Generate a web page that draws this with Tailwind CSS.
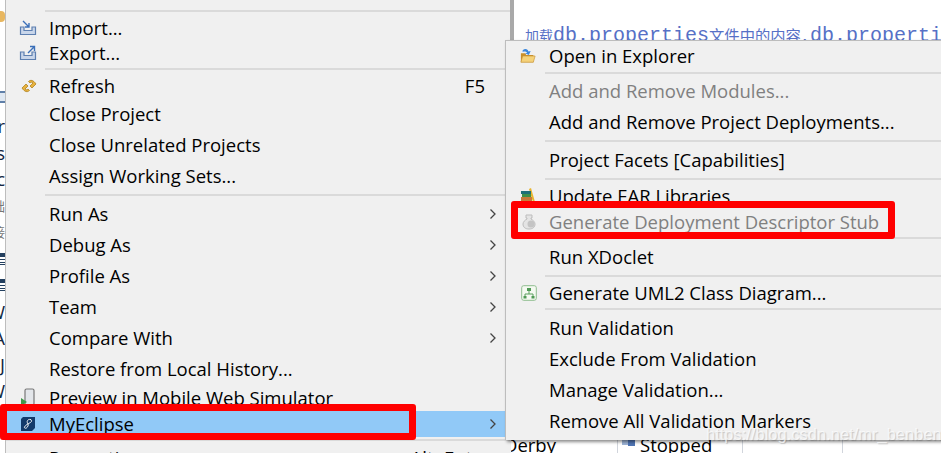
<!DOCTYPE html>
<html lang="en">
<head>
    <meta charset="UTF-8">
    <title>MyEclipse context menu</title>
    <script src="https://cdn.jsdelivr.net/npm/@tailwindcss/browser@4"></script>
</head>
<body class="bg-white w-[941px] h-[453px] overflow-hidden relative font-['Open_Sans','Noto_Sans','Noto_Sans_CJK_SC',sans-serif] text-[18.5px] text-black">

    <!-- editor behind the submenu -->
    <div class="absolute left-[525px] top-[26px] h-[14px] overflow-hidden whitespace-nowrap text-[#5670c6] font-['Liberation_Mono','Noto_Sans_CJK_SC',monospace] text-[20px] leading-[20px]"><span class="text-[14px]">加载</span>db.properties<span class="text-[15.300px]">文件中的内容,</span>db.properti</div>

    <!-- table behind the submenu, bottom right -->
    <div class="absolute left-[509px] top-[436px] h-[17px] w-[432px] overflow-hidden flex leading-[18px]">
        <div class="w-[109px] border-r border-gray-300"><span class="block -ml-[5px]">Derby</span></div>
        <div class="w-[125px] flex items-start border-r border-gray-300 pl-[4px]">
            <svg class="w-[14px] h-[10px] mr-[4px] shrink-0" viewBox="0 0 14 10"><rect x="0" y="4" width="6" height="5" fill="#9db4d6"/><rect x="6" y="4" width="7" height="6" fill="#4f74b3"/></svg>
            <span>Stopped</span>
        </div>
        <div class="w-[100px] border-r border-gray-300"></div>
    </div>

    <!-- left edge of the tree view -->
    <div class="absolute left-0 top-0 w-[5px] h-[453px] overflow-hidden">
        <div class="h-[11px]"></div>
        <div class="h-[11px] bg-[#e8b760] rounded-r-sm"></div>
        <div class="h-[69px]"></div>
        <div class="h-[12px] border-y-2 border-[#5f7fa8] bg-[#dfe8f2]"></div>
        <div class="h-[10px]"></div>
        <div class="flex flex-col text-[#12263f] leading-[26.5px] whitespace-nowrap *:h-[26.5px] *:flex *:justify-end">
            <div>r</div>
            <div>s</div>
            <div>c</div>
            <div class="text-[#777] text-[13px]">础</div>
            <div class="text-[#777] text-[13px]">接</div>
            <div class="items-center"><div class="w-[5px] h-[12px] shrink-0 border-t-[3px] border-b border-[#24405f] bg-[repeating-linear-gradient(#24405f_0_1px,#fff_1px_3px)]"></div></div>
            <div class="items-center"><div class="w-[5px] h-[12px] shrink-0 border-t-[3px] border-b border-[#24405f] bg-[repeating-linear-gradient(#24405f_0_1px,#fff_1px_3px)]"></div></div>
            <div>W</div>
            <div>A</div>
            <div>J</div>
            <div>W</div>
        </div>
    </div>

    <!-- main context menu -->
    <div class="absolute left-[5px] top-0 w-[506px] h-[453px] overflow-hidden bg-[#f0f0f0] border-l border-[#bdbdbd] flex flex-col *:shrink-0">
        <div class="h-[12px] border-b-2 border-[#dadada] ml-[39px]"></div>

        <div class="h-[26px] mt-[3px] flex items-center">
            <svg class="w-[18px] h-[18px] ml-[13px]" viewBox="0 0 18 18"><path d="M4 2l6 6M10 4v4H6" fill="none" stroke="#3b6fb8" stroke-width="1.4"/><path d="M1.500 8v7.500h15V8h-3.500v3.500H5V8z" fill="#c9d6ea" stroke="#5d7fb0" stroke-width="1.2"/></svg>
            <span class="ml-[12px]">Import...</span>
        </div>
        <div class="h-[24px] flex items-center">
            <svg class="w-[18px] h-[18px] ml-[13px]" viewBox="0 0 18 18"><path d="M9 9l6-6M11 2.500h4.500V7" fill="none" stroke="#3b6fb8" stroke-width="1.4"/><path d="M1.500 8v7.500h15V8h-3.500v3.500H5V8z" fill="#c9d6ea" stroke="#5d7fb0" stroke-width="1.2"/></svg>
            <span class="ml-[12px]">Export...</span>
        </div>
        <div class="h-[5px] border-b-2 border-[#dadada] ml-[39px]"></div>

        <div class="h-[28px] mt-[2px] flex items-center">
            <svg class="w-[16px] h-[16px] ml-[15px]" viewBox="0 0 16 16"><path d="M1 10l4-4 2 2-3 3c1 1 2 1 3 0l1.500 1.500c-2 2-5 1.500-7.500-2.500z" fill="#e8b23e" stroke="#a87a16" stroke-width=".7"/><path d="M15 6l-4 4-2-2 3-3c-1-1-2-1-3 0L7.500 3.500c2-2 5-1.500 7.500 2.500z" fill="#e8b23e" stroke="#a87a16" stroke-width=".7"/></svg>
            <span class="ml-[12px]">Refresh</span>
            <span class="ml-auto mr-[26px]">F5</span>
        </div>
        <div class="h-[28px] flex items-center pl-[43px]">Close Project</div>
        <div class="h-[33px] flex items-center pl-[43px]">Close Unrelated Projects</div>
        <div class="h-[30px] flex items-center pl-[43px]">Assign Working Sets...</div>
        <div class="h-[5px] border-b-2 border-[#dadada] ml-[39px]"></div>

        <div class="h-[31px] mt-[2px] flex items-center pl-[43px] justify-between pr-[14px]">Run As<svg class="w-[8px] h-[12px]" viewBox="0 0 8 12"><path d="M1.500 1.500L6 6l-4.500 4.500" fill="none" stroke="#444" stroke-width="1.300"/></svg></div>
        <div class="h-[31px] flex items-center pl-[43px] justify-between pr-[14px]">Debug As<svg class="w-[8px] h-[12px]" viewBox="0 0 8 12"><path d="M1.500 1.500L6 6l-4.500 4.500" fill="none" stroke="#444" stroke-width="1.300"/></svg></div>
        <div class="h-[31px] flex items-center pl-[43px] justify-between pr-[14px]">Profile As<svg class="w-[8px] h-[12px]" viewBox="0 0 8 12"><path d="M1.500 1.500L6 6l-4.500 4.500" fill="none" stroke="#444" stroke-width="1.300"/></svg></div>
        <div class="h-[31px] flex items-center pl-[43px] justify-between pr-[14px]">Team<svg class="w-[8px] h-[12px]" viewBox="0 0 8 12"><path d="M1.500 1.500L6 6l-4.500 4.500" fill="none" stroke="#444" stroke-width="1.300"/></svg></div>
        <div class="h-[31px] flex items-center pl-[43px] justify-between pr-[14px]">Compare With<svg class="w-[8px] h-[12px]" viewBox="0 0 8 12"><path d="M1.500 1.500L6 6l-4.500 4.500" fill="none" stroke="#444" stroke-width="1.300"/></svg></div>
        <div class="h-[31px] flex items-center pl-[43px]">Restore from Local History...</div>
        <div class="h-[27px] flex items-center">
            <svg class="w-[18px] h-[20px] ml-[13px]" viewBox="0 0 18 20"><rect x="6" y="1" width="9" height="16" rx="1.500" fill="#e3e6ea" stroke="#777" stroke-width="1.200"/><path d="M2 10l6 4-6 4z" fill="#3f9a4a"/></svg>
            <span class="ml-[12px]">Preview in Mobile Web Simulator</span>
        </div>
        <div class="h-[26px] flex items-center justify-between pr-[14px] bg-[#91c9f7]">
            <div class="flex items-center">
                <svg class="w-[14px] h-[14px] ml-[15px]" viewBox="0 0 14 14"><path d="M2 0h12v11l-3 3H0V2z" fill="#123a6b"/><path d="M9.500 2.500C7 2 5.500 4 6.500 6c.7 1.400 1.500 2-.5 4.500-1 1.200-3 1-2.500-.5.500-1.600 4-3.500 6-4.500 1.500-.8 1.500-3-.5-3z" fill="none" stroke="#fff" stroke-width=".9"/></svg>
                <span class="ml-[14px]">MyEclipse</span>
            </div>
            <svg class="w-[8px] h-[12px]" viewBox="0 0 8 12"><path d="M1.500 1.500L6 6l-4.500 4.500" fill="none" stroke="#444" stroke-width="1.300"/></svg>
        </div>
        <div class="h-[4px] border-b-2 border-[#dadada]"></div>
        <div class="h-[34px] flex items-center pl-[43px]">Properties<span class="ml-[272px]">Alt+Enter</span></div>
    </div>
    <div class="absolute left-[510px] top-0 w-[4px] h-[41px] bg-[#a9a9a9]"></div>

    <!-- MyEclipse submenu -->
    <div class="absolute left-[505px] top-[40px] w-[436px] h-[400px] bg-[#f0f0f0] border-l border-t border-[#bdbdbd] shadow-[2px_2px_3px_rgba(0,0,0,0.45)] flex flex-col *:shrink-0">
        <div class="h-[30px] flex items-center">
            <svg class="w-[16px] h-[16px] ml-[14px]" viewBox="0 0 18 18"><path d="M1 6h5l1 2h8v8H1z" fill="#c98f2a"/><path d="M3 9h14l-2 7H1z" fill="#f5d27a" stroke="#c79235" stroke-width=".7"/><path d="M3 2.500c3-2.500 6-1 6.500 1.500L12 3.500 10 8 5.500 6 8 5.500C7 4 5 3.500 3 4.500z" fill="#3a86dd"/></svg>
            <span class="ml-[13px]">Open in Explorer</span>
        </div>
        <div class="h-[3px] border-b-2 border-[#dadada] ml-[39px]"></div>

        <div class="h-[32px] mt-[1px] flex items-center pl-[43px] text-[#808080]">Add and Remove Modules...</div>
        <div class="h-[30px] flex items-center pl-[43px]">Add and Remove Project Deployments...</div>
        <div class="h-[5px] border-b-2 border-[#dadada] ml-[39px]"></div>

        <div class="h-[36px] flex items-center pl-[43px]">Project Facets [Capabilities]</div>
        <div class="h-[2px] border-b-2 border-[#dadada] ml-[39px]"></div>

        <div class="h-[32px] flex items-center">
            <svg class="w-[16px] h-[16px] ml-[14px]" viewBox="0 0 16 16"><path d="M11 0l4 14h-2L9 1z" fill="#e8b52e"/><rect x="1" y="3" width="10" height="3" fill="#1f6f78"/><rect x="2" y="6" width="9" height="3" fill="#3f8f4a"/><rect x="1" y="9" width="11" height="5" fill="#c87a3a"/></svg>
            <span class="ml-[13px]">Update EAR Libraries</span>
        </div>
        <div class="h-[20px] flex items-center text-[#808080]">
            <svg class="w-[16px] h-[16px] ml-[15px]" viewBox="0 0 16 16"><path d="M5 1h6v3H10v1c2 1 4 3 4 5 0 3-2 5-6 5s-6-2-6-5c0-2 2-4 4-5V4H5z" fill="#e4e4e4" stroke="#bdbdbd"/><circle cx="10" cy="10" r="3.500" fill="#c4c4c4"/></svg>
            <span class="ml-[12px]">Generate Deployment Descriptor Stub</span>
        </div>
        <div class="h-[7px] border-b-2 border-[#dadada] ml-[39px]"></div>

        <div class="h-[36px] flex items-center pl-[43px]">Run XDoclet</div>
        <div class="h-[2px] border-b-2 border-[#dadada] ml-[39px]"></div>

        <div class="h-[31px] flex items-center">
            <svg class="w-[16px] h-[16px] ml-[15px]" viewBox="0 0 16 16"><rect x=".7" y=".7" width="14.600" height="14.600" rx="2" fill="#f4f9f1" stroke="#8fbd8f"/><path d="M8 6v3M4 11V9h8v2" fill="none" stroke="#5b9f5f"/><rect x="6" y="3" width="4" height="3" fill="#4f9a55"/><rect x="2.500" y="11" width="3" height="2.500" fill="#4f9a55"/><rect x="10.500" y="11" width="3" height="2.500" fill="#4f9a55"/></svg>
            <span class="ml-[12px]">Generate UML2 Class Diagram...</span>
        </div>
        <div class="h-[2px] border-b-2 border-[#dadada] ml-[39px]"></div>

        <div class="h-[31px] mt-[2px] flex items-center pl-[43px]">Run Validation</div>
        <div class="h-[31px] flex items-center pl-[43px]">Exclude From Validation</div>
        <div class="h-[31px] flex items-center pl-[43px]">Manage Validation...</div>
        <div class="h-[31px] flex items-center pl-[43px]">Remove All Validation Markers</div>
    </div>

    <!-- red annotation boxes -->
    <div class="absolute left-0 top-[404px] w-[416px] h-[36px] border-[7px] border-[#ff0000] rounded-[3px]"></div>
    <div class="absolute left-[511px] top-[201px] w-[384px] h-[38px] border-[7px] border-[#ff0000] rounded-[3px]"></div>

    <!-- blog watermark -->
    <div class="absolute left-[706px] top-[423px] text-[16.500px] leading-[22px] text-white/70 [text-shadow:1px_1px_1px_rgba(0,0,0,0.18)] font-['Liberation_Sans',sans-serif]">https://blog.csdn.net/mr_benben</div>
</body>
</html>
